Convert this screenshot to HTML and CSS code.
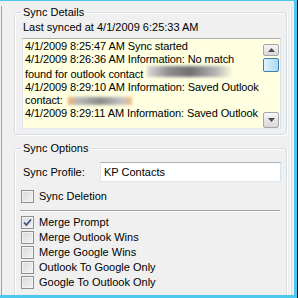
FILE: index.html
```html
<!DOCTYPE html>
<html lang="en">

<head>
    <meta charset="UTF-8">
    <title>Sync Details</title>
    <link rel="stylesheet" href="styles.css">
</head>

<body>
    <div class="screen">
        <div class="frame">
            <div class="panel">
                <fieldset class="group details">
                    <legend>Sync Details</legend>
                    <div class="last-sync">Last synced at 4/1/2009 6:25:33 AM</div>
                    <div class="log">
                        <div class="log-text">
                            <div>4/1/2009 8:25:47 AM Sync started</div>
                            <div>4/1/2009 8:26:36 AM Information: No match</div>
                            <div>found for outlook contact <span class="smudge wide"></span></div>
                            <div>4/1/2009 8:29:10 AM Information: Saved Outlook</div>
                            <div>contact: <span class="smudge short"></span></div>
                            <div>4/1/2009 8:29:11 AM Information: Saved Outlook</div>
                        </div>
                        <div class="scrollbar">
                            <div class="sb-btn up">
                                <svg width="7" height="4" viewBox="0 0 7 4"><path d="M0 4 L3.5 0 L7 4 Z" fill="#4d4d4d"/></svg>
                            </div>
                            <div class="sb-thumb"></div>
                            <div class="sb-track"></div>
                            <div class="sb-btn down">
                                <svg width="7" height="4" viewBox="0 0 7 4"><path d="M0 0 L3.5 4 L7 0 Z" fill="#4d4d4d"/></svg>
                            </div>
                        </div>
                    </div>
                </fieldset>

                <fieldset class="group options">
                    <legend>Sync Options</legend>
                    <div class="profile-row">
                        <label class="profile-label" for="profile">Sync Profile:</label>
                        <div class="input" id="profile">KP Contacts</div>
                    </div>
                    <div class="check"><span class="box"></span>Sync Deletion</div>
                    <div class="separator"></div>
                    <div class="check">
                        <span class="box">
                            <svg width="9" height="9" viewBox="0 0 9 9"><path d="M1 4.5 L3.4 7 L8 1.5" fill="none" stroke="#3d4f86" stroke-width="1.8"/></svg>
                        </span>Merge Prompt
                    </div>
                    <div class="check"><span class="box"></span>Merge Outlook Wins</div>
                    <div class="check"><span class="box"></span>Merge Google Wins</div>
                    <div class="check"><span class="box"></span>Outlook To Google Only</div>
                    <div class="check"><span class="box"></span>Google To Outlook Only</div>
                </fieldset>
            </div>
        </div>
    </div>
</body>

</html>
```

FILE: styles.css
```css
body {
    margin: 0;
    font-family: "Liberation Sans", Arial, sans-serif;
    font-size: 11px;
    color: #000;
    background: #f0f0f0;
}

.screen {
    width: 298px;
    height: 298px;
    box-sizing: border-box;
    border-right: 1px solid #111;
    overflow: hidden;
}

.frame {
    height: 298px;
    box-sizing: border-box;
    border-top: 1px solid #4cc8ef;
    border-right: 3px solid #4cc8ef;
    border-bottom: 3px solid #4cc8ef;
    background: #f0f0f0;
    overflow: hidden;
}

.panel {
    margin-left: 1px;
    margin-right: 2px;
    height: 100%;
    border-left: 1px solid #a0a0a0;
    border-right: 1px solid #dcdcdc;
    box-shadow: inset -1px 0 0 #fff;
}

/* group boxes */

.group {
    margin: 0 4px 0 12px;
    border: 1px solid #d5dfe5;
    border-radius: 3px;
    box-shadow: inset 1px 1px 0 #fff, 1px 1px 0 #fff;
    padding: 2px 5px 5px 7px;
}

.group legend {
    margin-left: -1px;
    padding: 0 1px 0 2px;
    line-height: 13px;
}

.details {
    margin-top: 5px;
}

.options {
    margin-top: 7px;
    padding-top: 7px;
    height: 200px;
}

.last-sync {
    padding-left: 1px;
    line-height: 13px;
    margin-bottom: 4px;
}

/* log box */

.log {
    display: flex;
    height: 91px;
    box-sizing: border-box;
    background: #ffffe1;
    border: 1px solid #e3e9ef;
    border-top-color: #abadb3;
    border-left-color: #e2e3ea;
    border-right-color: #dbdfe6;
}

.log-text {
    flex: 1;
    padding: 1px 0 0 2px;
    line-height: 13px;
    letter-spacing: -0.09px;
    white-space: nowrap;
    overflow: hidden;
}

.smudge {
    display: inline-block;
    vertical-align: -1px;
    filter: blur(1.8px);
}

.smudge.wide {
    width: 86px;
    height: 11px;
    margin-left: 1px;
    vertical-align: 1px;
    background: linear-gradient(90deg, #dcdcdc, #8e8e8e 25%, #707070 50%, #b4b4b4 80%, rgba(220, 220, 220, 0));
}

.smudge.short {
    width: 64px;
    height: 8px;
    margin-left: 2px;
    background: linear-gradient(90deg, #f2b56a, #b9b9b9 15%, #8c8c8c 50%, #c4c4c4 85%, #f2c07a);
}

.scrollbar {
    display: flex;
    flex-direction: column;
    width: 16px;
    margin: 5px 1px 0 0;
}

.sb-btn {
    display: flex;
    align-items: center;
    justify-content: center;
    box-sizing: border-box;
    border: 1px solid #a7a7a7;
    border-radius: 2px;
    background: linear-gradient(#f7f7f7, #e6e6e6 50%, #d8d8d8);
}

.sb-btn.up {
    height: 12px;
}

.sb-btn.down {
    height: 16px;
}

.sb-thumb {
    height: 14px;
    margin-top: 2px;
    box-sizing: border-box;
    border: 1px solid #3c7fb1;
    border-radius: 2px;
    background: linear-gradient(90deg, #e3f4fc, #c4e5f6 50%, #a9d9f2);
}

.sb-track {
    flex: 1;
}

/* options */

.profile-row {
    display: flex;
    align-items: center;
    height: 20px;
}

.profile-label {
    width: 77px;
    padding-left: 1px;
}

.input {
    flex: 1;
    height: 20px;
    box-sizing: border-box;
    padding-left: 3px;
    line-height: 18px;
    background: #fff;
    border: 1px solid #e3e9ef;
    border-top-color: #abadb3;
    border-left-color: #e2e3ea;
    border-right-color: #dbdfe6;
}

.check {
    display: flex;
    align-items: center;
    height: 15px;
    line-height: 15px;
    margin-left: -1px;
}

.profile-row + .check {
    margin-top: 7px;
}

.box {
    display: flex;
    align-items: center;
    justify-content: center;
    width: 13px;
    height: 13px;
    box-sizing: border-box;
    margin-right: 5px;
    border: 1px solid #8f8f8f;
    background: linear-gradient(135deg, #d8d8d8, #f4f4f4);
    box-shadow: inset 0 0 0 1px #f4f4f4;
}

.separator {
    height: 1px;
    margin: 6px 1px 4px -2px;
    background: #a0a0a0;
    box-shadow: 0 1px 0 #fff;
}
```
